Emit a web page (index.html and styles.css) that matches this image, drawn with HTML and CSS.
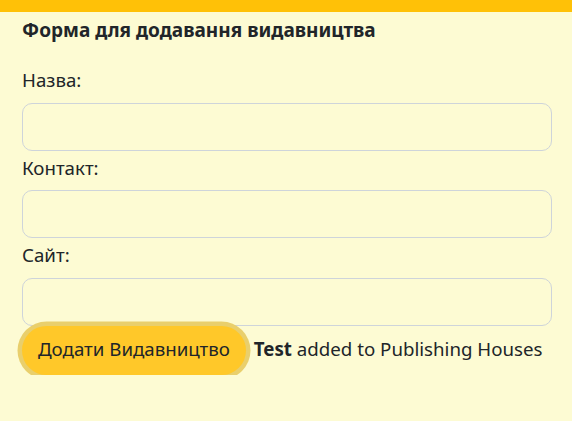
FILE: index.html
```html
<!DOCTYPE html>
<html lang="uk">
<head>
<meta charset="utf-8">
<link rel="stylesheet" href="styles.css">
</head>
<body>
<div class="topbar"></div>
<main class="page">
  <h2 class="title">Форма для додавання видавництва</h2>
  <form class="form">
    <label class="label label-first">Назва:</label>
    <input class="input" type="text">
    <label class="label">Контакт:</label>
    <input class="input" type="text">
    <label class="label">Сайт:</label>
    <input class="input" type="text">
    <div class="actions">
      <button type="button" class="btn">Додати Видавництво</button>
      <span class="msg"><b>Test</b> added to Publishing Houses</span>
    </div>
  </form>
</main>
</body>
</html>
```
FILE: styles.css
```css
html, body {
  margin: 0;
  padding: 0;
  background: #fdfbd3;
  font-family: "Noto Sans", "Open Sans", sans-serif;
  color: #212529;
}
.topbar {
  height: 12px;
  background: #ffc107;
}
.page {
  padding: 0 20px 0 22px;
}
.title {
  margin: 5px 0 0;
  font-size: 19px;
  font-weight: 700;
  line-height: 26px;
}
.form {
  display: flex;
  flex-direction: column;
}
.label {
  font-size: 18.7px;
  line-height: 28px;
  margin: 3px 0 8.5px;
}
.label-first {
  margin-top: 23px;
}
.input {
  box-sizing: border-box;
  height: 48px;
  border: 1px solid #ced4da;
  border-radius: 10px;
  background: transparent;
  font-size: 18px;
  padding: 0 12px;
}
.actions {
  display: flex;
  align-items: center;
}
.btn {
  box-sizing: border-box;
  height: 49px;
  padding: 0 16px 4px;
  border: none;
  border-radius: 25px;
  background: #ffc829;
  color: #212529;
  font-family: inherit;
  font-size: 18.7px;
  box-shadow: 0 0 0 4.5px #e9cf6c;
}
.msg {
  margin-left: 8px;
  padding-bottom: 4px;
  font-size: 18.7px;
}
```
